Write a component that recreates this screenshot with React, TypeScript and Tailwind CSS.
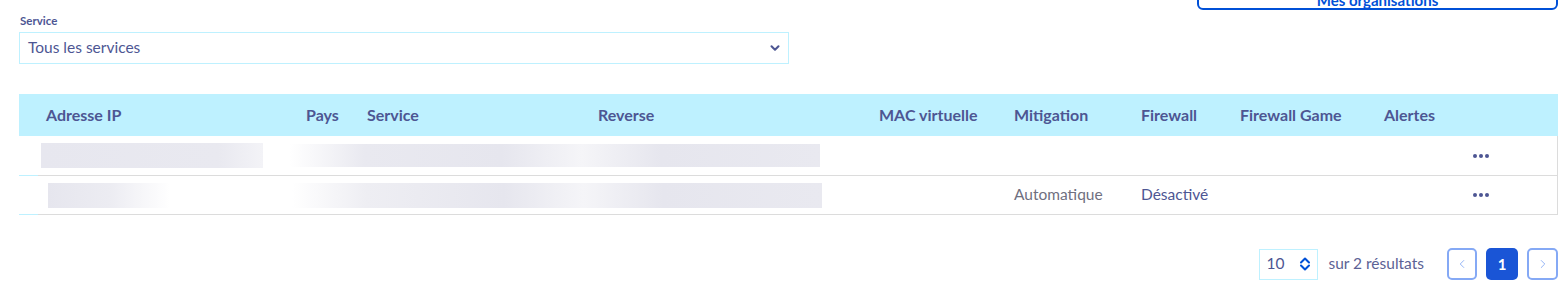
import { ChevronDown, ChevronLeft, ChevronRight } from 'lucide-react';

const font = { fontFamily: 'Lato, "Open Sans", sans-serif' };

const columns = [
  { label: 'Adresse IP', w: 'w-[260px]' },
  { label: 'Pays', w: 'w-[61px]' },
  { label: 'Service', w: 'w-[231px]' },
  { label: 'Reverse', w: 'w-[281px]' },
  { label: 'MAC virtuelle', w: 'w-[135px]' },
  { label: 'Mitigation', w: 'w-[127px]' },
  { label: 'Firewall', w: 'w-[99px]' },
  { label: 'Firewall Game', w: 'w-[144px]' },
  { label: 'Alertes', w: 'w-[89px]' },
];

function Dots() {
  return (
    <div className="flex gap-[2px]">
      <span className="h-[4px] w-[4px] rounded-full bg-[#4d5693]" />
      <span className="h-[4px] w-[4px] rounded-full bg-[#4d5693]" />
      <span className="h-[4px] w-[4px] rounded-full bg-[#4d5693]" />
    </div>
  );
}

function RowLine() {
  return (
    <div className="flex h-px">
      <div className="w-[19px] bg-[#bef1ff]" />
      <div className="flex-1 bg-[#dcdcdc]" />
    </div>
  );
}

function UpDown() {
  return (
    <svg width="12" height="14" viewBox="0 0 12 14" fill="none" stroke="#0050d7" strokeWidth="2" strokeLinecap="round" strokeLinejoin="round">
      <path d="M2 5.5 6 1.5l4 4" />
      <path d="M2 8.5l4 4 4-4" />
    </svg>
  );
}

export default function App() {
  return (
    <div className="h-[292px] w-[1568px] overflow-hidden bg-white text-[#4d5693]" style={font}>
      <div className="-mt-[30px] flex justify-end pr-[10px]">
        <button className="h-[40px] w-[361px] rounded-[6px] border-2 border-[#0050d7] text-[15px] font-bold text-[#0050d7]">
          <span className="relative top-[10px]">Mes organisations</span>
        </button>
      </div>

      <div className="pl-[19px] pr-[10px] pt-[3px]">
        <label className="block pl-px text-[11.5px] font-bold leading-[16px]">Service</label>
        <div className="mt-[3px] flex h-[32px] w-[770px] items-center justify-between border border-[#bef1ff] pl-[8px] pr-[6px]">
          <span className="text-[15.5px]">Tous les services</span>
          <ChevronDown size={14} strokeWidth={3.5} className="text-[#4d5693]" />
        </div>

        <div className="mt-[30px]">
          <div className="flex h-[42px] items-center bg-[#bef1ff] pl-[27px] text-[16px] font-bold">
            {columns.map((c) => (
              <div key={c.label} className={`${c.w} shrink-0`}>
                {c.label}
              </div>
            ))}
          </div>

          <div className="border-r border-[#dcdcdc]">
            <div className="flex h-[39px] items-center">
              <div className="ml-[22px] h-[25px] w-[222px] bg-[linear-gradient(90deg,#e7e7ef_0%,#e9e9f0_80%,#f3f3f7_100%)]" />
              <div className="ml-[27px] h-[23px] w-[530px] bg-[linear-gradient(90deg,#ffffff_0%,#e9e9f0_14%,#e6e6ee_40%,#f5f5f8_55%,#e6e6ee_70%,#e9e9f0_100%)]" />
              <div className="ml-[653px]">
                <Dots />
              </div>
            </div>
            <RowLine />
            <div className="flex h-[38px] items-center">
              <div className="ml-[29px] h-[25px] w-[122px] bg-[linear-gradient(90deg,#e6e6ee_0%,#ececf2_50%,#ffffff_100%)]" />
              <div className="ml-[122px] h-[25px] w-[530px] bg-[linear-gradient(90deg,#ffffff_0%,#eeeef3_14%,#e6e6ee_40%,#f5f5f8_55%,#e6e6ee_70%,#e9e9f0_100%)]" />
              <div className="ml-[192px] w-[127px] text-[15.5px] text-[#6f6f80]">Automatique</div>
              <div className="w-[332px] text-[15.5px]">Désactivé</div>
              <Dots />
            </div>
            <RowLine />
          </div>
        </div>

        <div className="mt-[33px] flex items-center justify-end">
          <div className="flex h-[31px] w-[59px] items-center justify-between border border-[#bef1ff] pl-[6px] pr-[6px]">
            <span className="text-[15.5px]">10</span>
            <UpDown />
          </div>
          <span className="ml-[10px] text-[15.5px] text-[#5c6295]">sur 2 résultats</span>
          <div className="ml-[23px] flex gap-[9px]">
            <div className="flex h-[32px] w-[30px] items-center justify-center rounded-[5px] border-2 border-[#85a9f5] text-[#85a9f5]">
              <ChevronLeft size={14} strokeWidth={1.5} />
            </div>
            <div className="flex h-[32px] w-[32px] items-center justify-center rounded-[5px] bg-[#1a55d6] text-[15px] font-bold text-white">
              1
            </div>
            <div className="flex h-[32px] w-[31px] items-center justify-center rounded-[5px] border-2 border-[#85a9f5] text-[#85a9f5]">
              <ChevronRight size={14} strokeWidth={1.5} />
            </div>
          </div>
        </div>
      </div>
    </div>
  );
}
